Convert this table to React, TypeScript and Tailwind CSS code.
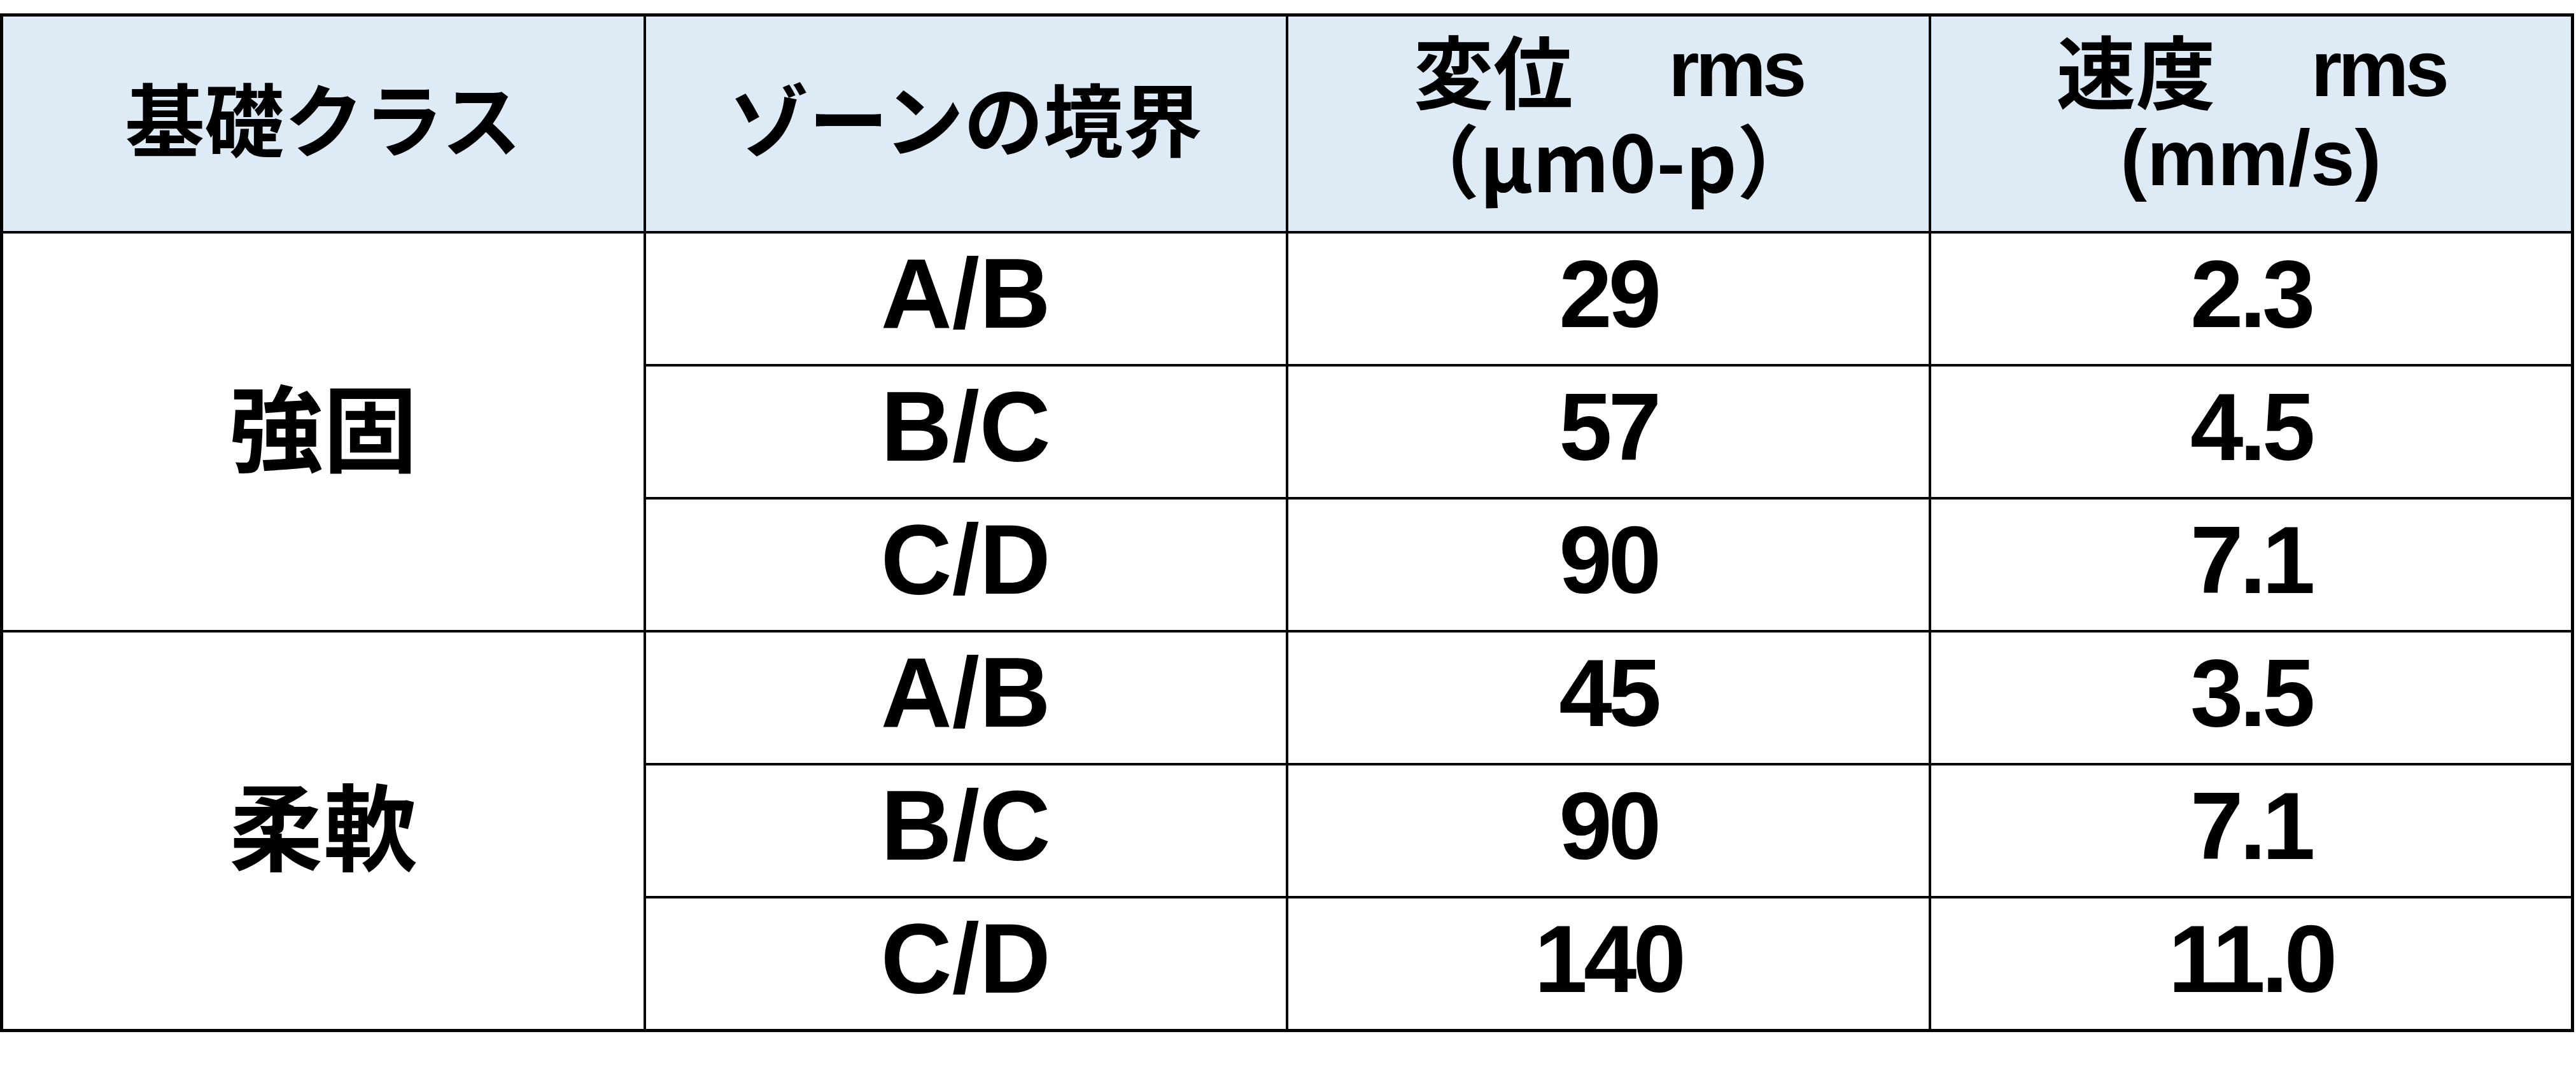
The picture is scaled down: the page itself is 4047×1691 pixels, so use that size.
const cjk = "font-['Noto_Sans_CJK_JP',sans-serif]";
const latin = "font-['Liberation_Sans','Noto_Sans_CJK_JP',sans-serif]";

type Row = { zone: string; disp: string; vel: string };

const groups: { name: string; rows: Row[] }[] = [
  {
    name: '強固',
    rows: [
      { zone: 'A/B', disp: '29', vel: '2.3' },
      { zone: 'B/C', disp: '57', vel: '4.5' },
      { zone: 'C/D', disp: '90', vel: '7.1' },
    ],
  },
  {
    name: '柔軟',
    rows: [
      { zone: 'A/B', disp: '45', vel: '3.5' },
      { zone: 'B/C', disp: '90', vel: '7.1' },
      { zone: 'C/D', disp: '140', vel: '11.0' },
    ],
  },
];

function HeadCell({ children, className = 'pb-[24px]' }: { children: React.ReactNode; className?: string }) {
  return (
    <div className={`bg-[#ddebf7] flex flex-col items-center justify-center text-[125px] leading-none font-bold text-black ${className}`}>
      {children}
    </div>
  );
}

// one line of header text, fixed height so mixed fonts don't push lines apart
function HeadLine({ children }: { children: React.ReactNode }) {
  return <div className="h-[140px] flex items-center whitespace-nowrap">{children}</div>;
}

function Cell({ children, className = '' }: { children: React.ReactNode; className?: string }) {
  return (
    <div className={`bg-white flex items-center justify-center font-bold text-black leading-none ${className}`}>
      {children}
    </div>
  );
}

export default function App() {
  return (
    <div className="w-[4047px] h-[1691px] bg-white pt-[21px]">
      <div className="w-[4044px] grid grid-cols-4 grid-rows-[337px_repeat(6,205px)] gap-[4px] p-[5px] bg-black">
        {/* header */}
        <HeadCell>
          <HeadLine>
            <span className={cjk}>基礎クラス</span>
          </HeadLine>
        </HeadCell>
        <HeadCell>
          <HeadLine>
            <span className={cjk}>ゾーンの境界</span>
          </HeadLine>
        </HeadCell>
        <HeadCell className="pb-[34px]">
          <HeadLine>
            <span className={cjk}>変位</span>
            <span className="w-[150px]" />
            <span className={`tracking-[-6px] ${latin}`}>rms</span>
          </HeadLine>
          <HeadLine>
            <span className={cjk}>（μm0-p）</span>
          </HeadLine>
        </HeadCell>
        <HeadCell className="pb-[34px]">
          <HeadLine>
            <span className={cjk}>速度</span>
            <span className="w-[150px]" />
            <span className={`tracking-[-6px] ${latin}`}>rms</span>
          </HeadLine>
          <HeadLine>
            <span className={latin}>(mm/s)</span>
          </HeadLine>
        </HeadCell>

        {/* body */}
        {groups.map((g) => (
          <div key={g.name} className="contents">
            <Cell className={`row-span-3 pb-[26px] text-[148px] ${cjk}`}>{g.name}</Cell>
            {g.rows.map((r, i) => (
              <div key={i} className="contents">
                <Cell className={`pb-[16px] text-[155px] ${latin}`}>{r.zone}</Cell>
                <Cell className={`pb-[16px] text-[150px] tracking-[-6px] ${latin}`}>{r.disp}</Cell>
                <Cell className={`pb-[16px] text-[150px] tracking-[-6px] ${latin}`}>{r.vel}</Cell>
              </div>
            ))}
          </div>
        ))}
      </div>
    </div>
  );
}
